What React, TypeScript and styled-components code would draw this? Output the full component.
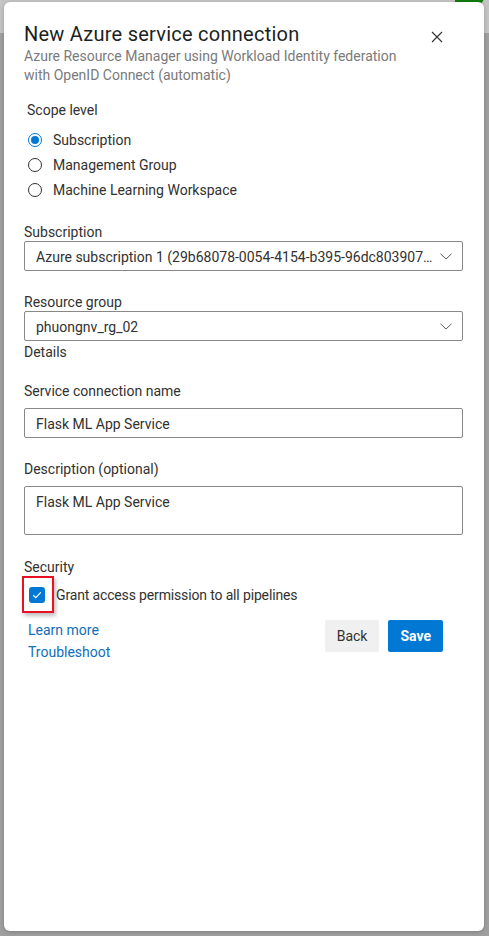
import React from "react";
import styled, { createGlobalStyle } from "styled-components";

const Global = createGlobalStyle`
  html, body { margin: 0; padding: 0; }
  body {
    background: #9f9f9f;
    font-family: Roboto, "Liberation Sans", sans-serif;
    color: #323130;
    width: 489px;
    height: 936px;
    overflow: hidden;
  }
`;

const Backdrop = styled.div`
  width: 489px;
  height: 936px;
  display: flex;
  flex-direction: column;
  background: linear-gradient(#c4c4c4 0, #c4c4c4 33px, #9f9f9f 33px);
  position: relative;
`;

const TopStrip = styled.div`
  position: absolute;
  top: -6px;
  left: 455px;
  width: 29px;
  height: 11px;
  background: #107c10;
  border-radius: 0 0 8px 0;
`;

const Panel = styled.div`
  margin: 2px 5px 5px 4px;
  flex: 1;
  background: #ffffff;
  border-radius: 6px;
  box-shadow: 0 1px 4px rgba(0, 0, 0, 0.2);
  padding: 19px 21px 0 20px;
  display: flex;
  flex-direction: column;
  position: relative;
  z-index: 1;
`;

const Header = styled.div`
  display: flex;
  justify-content: space-between;
  align-items: flex-start;
`;

const Titles = styled.div`
  display: flex;
  flex-direction: column;
`;

const Title = styled.h1`
  margin: 0;
  font-size: 20px;
  font-weight: 400;
  line-height: 26px;
  letter-spacing: 0.25px;
  color: #201f1e;
`;

const Subtitle = styled.div`
  font-size: 14px;
  line-height: 19px;
  color: #7a7a7a;
  width: 390px;
`;

const CloseButton = styled.button`
  border: none;
  background: none;
  padding: 0;
  margin: 10px 20px 0 0;
  width: 12px;
  height: 12px;
  display: flex;
  align-items: center;
  justify-content: center;
`;

const Label = styled.div<{ $indent?: boolean; $top?: number }>`
  font-size: 14px;
  line-height: 18px;
  color: #323130;
  margin-top: ${(p) => p.$top ?? 0}px;
  padding-left: ${(p) => (p.$indent ? "3px" : "0")};
`;

const RadioList = styled.div`
  display: flex;
  flex-direction: column;
  gap: 5px;
  margin-top: 11px;
  padding-left: 4px;
`;

const RadioRow = styled.label`
  display: flex;
  align-items: center;
  gap: 11px;
  height: 20px;
  font-size: 14px;
  color: #323130;
`;

const RadioCircle = styled.span<{ $checked?: boolean }>`
  width: 14px;
  height: 14px;
  box-sizing: border-box;
  border-radius: 50%;
  border: 1px solid ${(p) => (p.$checked ? "#0078d4" : "#323130")};
  display: flex;
  align-items: center;
  justify-content: center;
  &::after {
    content: "";
    width: 8px;
    height: 8px;
    border-radius: 50%;
    background: ${(p) => (p.$checked ? "#0078d4" : "transparent")};
  }
`;

const Field = styled.div<{ $height?: number; $top?: number }>`
  margin-top: ${(p) => p.$top ?? 0}px;
  height: ${(p) => p.$height ?? 30}px;
  box-sizing: border-box;
  border: 1px solid #8a8886;
  border-radius: 2px;
  display: flex;
  align-items: ${(p) => (p.$height ? "flex-start" : "center")};
  padding: ${(p) => (p.$height ? "5px 10px 0 11px" : "1px 10px 0 11px")};
  font-size: 14px;
  color: #323130;
`;

const FieldText = styled.span`
  flex: 1;
  white-space: nowrap;
  line-height: 20px;
`;

const CheckRow = styled.div`
  display: flex;
  align-items: center;
`;

const Highlight = styled.div`
  width: 32px;
  height: 37px;
  box-sizing: border-box;
  border: 2px solid #e81123;
  box-shadow: 2px 3px 4px rgba(0, 0, 0, 0.25);
  margin-left: -2px;
  display: flex;
  align-items: center;
  padding-left: 5px;
`;

const CheckBox = styled.span`
  width: 16px;
  height: 16px;
  border-radius: 3px;
  background: #0078d4;
  display: flex;
  align-items: center;
  justify-content: center;
`;

const CheckText = styled.span`
  font-size: 14px;
  line-height: 20px;
  letter-spacing: -0.15px;
  color: #323130;
  margin-left: 2px;
  padding-top: 1px;
`;

const Footer = styled.div`
  display: flex;
  justify-content: space-between;
  align-items: flex-start;
  margin-top: 7px;
  padding-right: 20px;
`;

const Links = styled.div`
  display: flex;
  flex-direction: column;
  padding-left: 4px;
  margin-top: -1px;
`;

const Link = styled.a`
  color: #106ebe;
  font-size: 14px;
  line-height: 22px;
  text-decoration: none;
`;

const Buttons = styled.div`
  display: flex;
  gap: 9px;
`;

const Button = styled.button<{ $primary?: boolean }>`
  height: 32px;
  padding: 0 12px;
  border: none;
  border-radius: 2px;
  font-family: inherit;
  font-size: 14px;
  font-weight: ${(p) => (p.$primary ? 700 : 400)};
  background: ${(p) => (p.$primary ? "#0078d4" : "#f0f0f0")};
  color: ${(p) => (p.$primary ? "#ffffff" : "#323130")};
`;

const Chevron = () => (
  <svg width="12" height="7" viewBox="0 0 12 7">
    <path d="M0.5 0.8 L6 6 L11.5 0.8" fill="none" stroke="#605e5c" strokeWidth="1" />
  </svg>
);

export default function App() {
  return (
    <>
      <Global />
      <Backdrop>
        <TopStrip />
        <Panel>
          <Header>
            <Titles>
              <Title>New Azure service connection</Title>
              <Subtitle>
                Azure Resource Manager using Workload Identity federation with OpenID Connect (automatic)
              </Subtitle>
            </Titles>
            <CloseButton aria-label="Close">
              <svg width="12" height="12" viewBox="0 0 12 12">
                <path d="M1 1 L11 11 M11 1 L1 11" stroke="#323130" strokeWidth="1.1" />
              </svg>
            </CloseButton>
          </Header>

          <Label $indent $top={16}>Scope level</Label>
          <RadioList>
            <RadioRow>
              <RadioCircle $checked />
              Subscription
            </RadioRow>
            <RadioRow>
              <RadioCircle />
              Management Group
            </RadioRow>
            <RadioRow>
              <RadioCircle />
              Machine Learning Workspace
            </RadioRow>
          </RadioList>

          <Label $top={23}>Subscription</Label>
          <Field>
            <FieldText>Azure subscription 1 (29b68078-0054-4154-b395-96dc803907…</FieldText>
            <Chevron />
          </Field>

          <Label $top={22}>Resource group</Label>
          <Field>
            <FieldText>phuongnv_rg_02</FieldText>
            <Chevron />
          </Field>
          <Label $top={2}>Details</Label>

          <Label $top={21}>Service connection name</Label>
          <Field $top={8}>
            <FieldText>Flask ML App Service</FieldText>
          </Field>

          <Label $top={22}>Description (optional)</Label>
          <Field $top={8} $height={49}>
            <FieldText>Flask ML App Service</FieldText>
          </Field>

          <Label $top={23}>Security</Label>
          <CheckRow>
            <Highlight>
              <CheckBox>
                <svg width="10" height="8" viewBox="0 0 10 8">
                  <path d="M1.2 4.2 L3.8 6.6 L8.8 1.4" fill="none" stroke="#ffffff" strokeWidth="1.2" />
                </svg>
              </CheckBox>
            </Highlight>
            <CheckText>Grant access permission to all pipelines</CheckText>
          </CheckRow>

          <Footer>
            <Links>
              <Link href="#">Learn more</Link>
              <Link href="#">Troubleshoot</Link>
            </Links>
            <Buttons>
              <Button>Back</Button>
              <Button $primary>Save</Button>
            </Buttons>
          </Footer>
        </Panel>
      </Backdrop>
    </>
  );
}
